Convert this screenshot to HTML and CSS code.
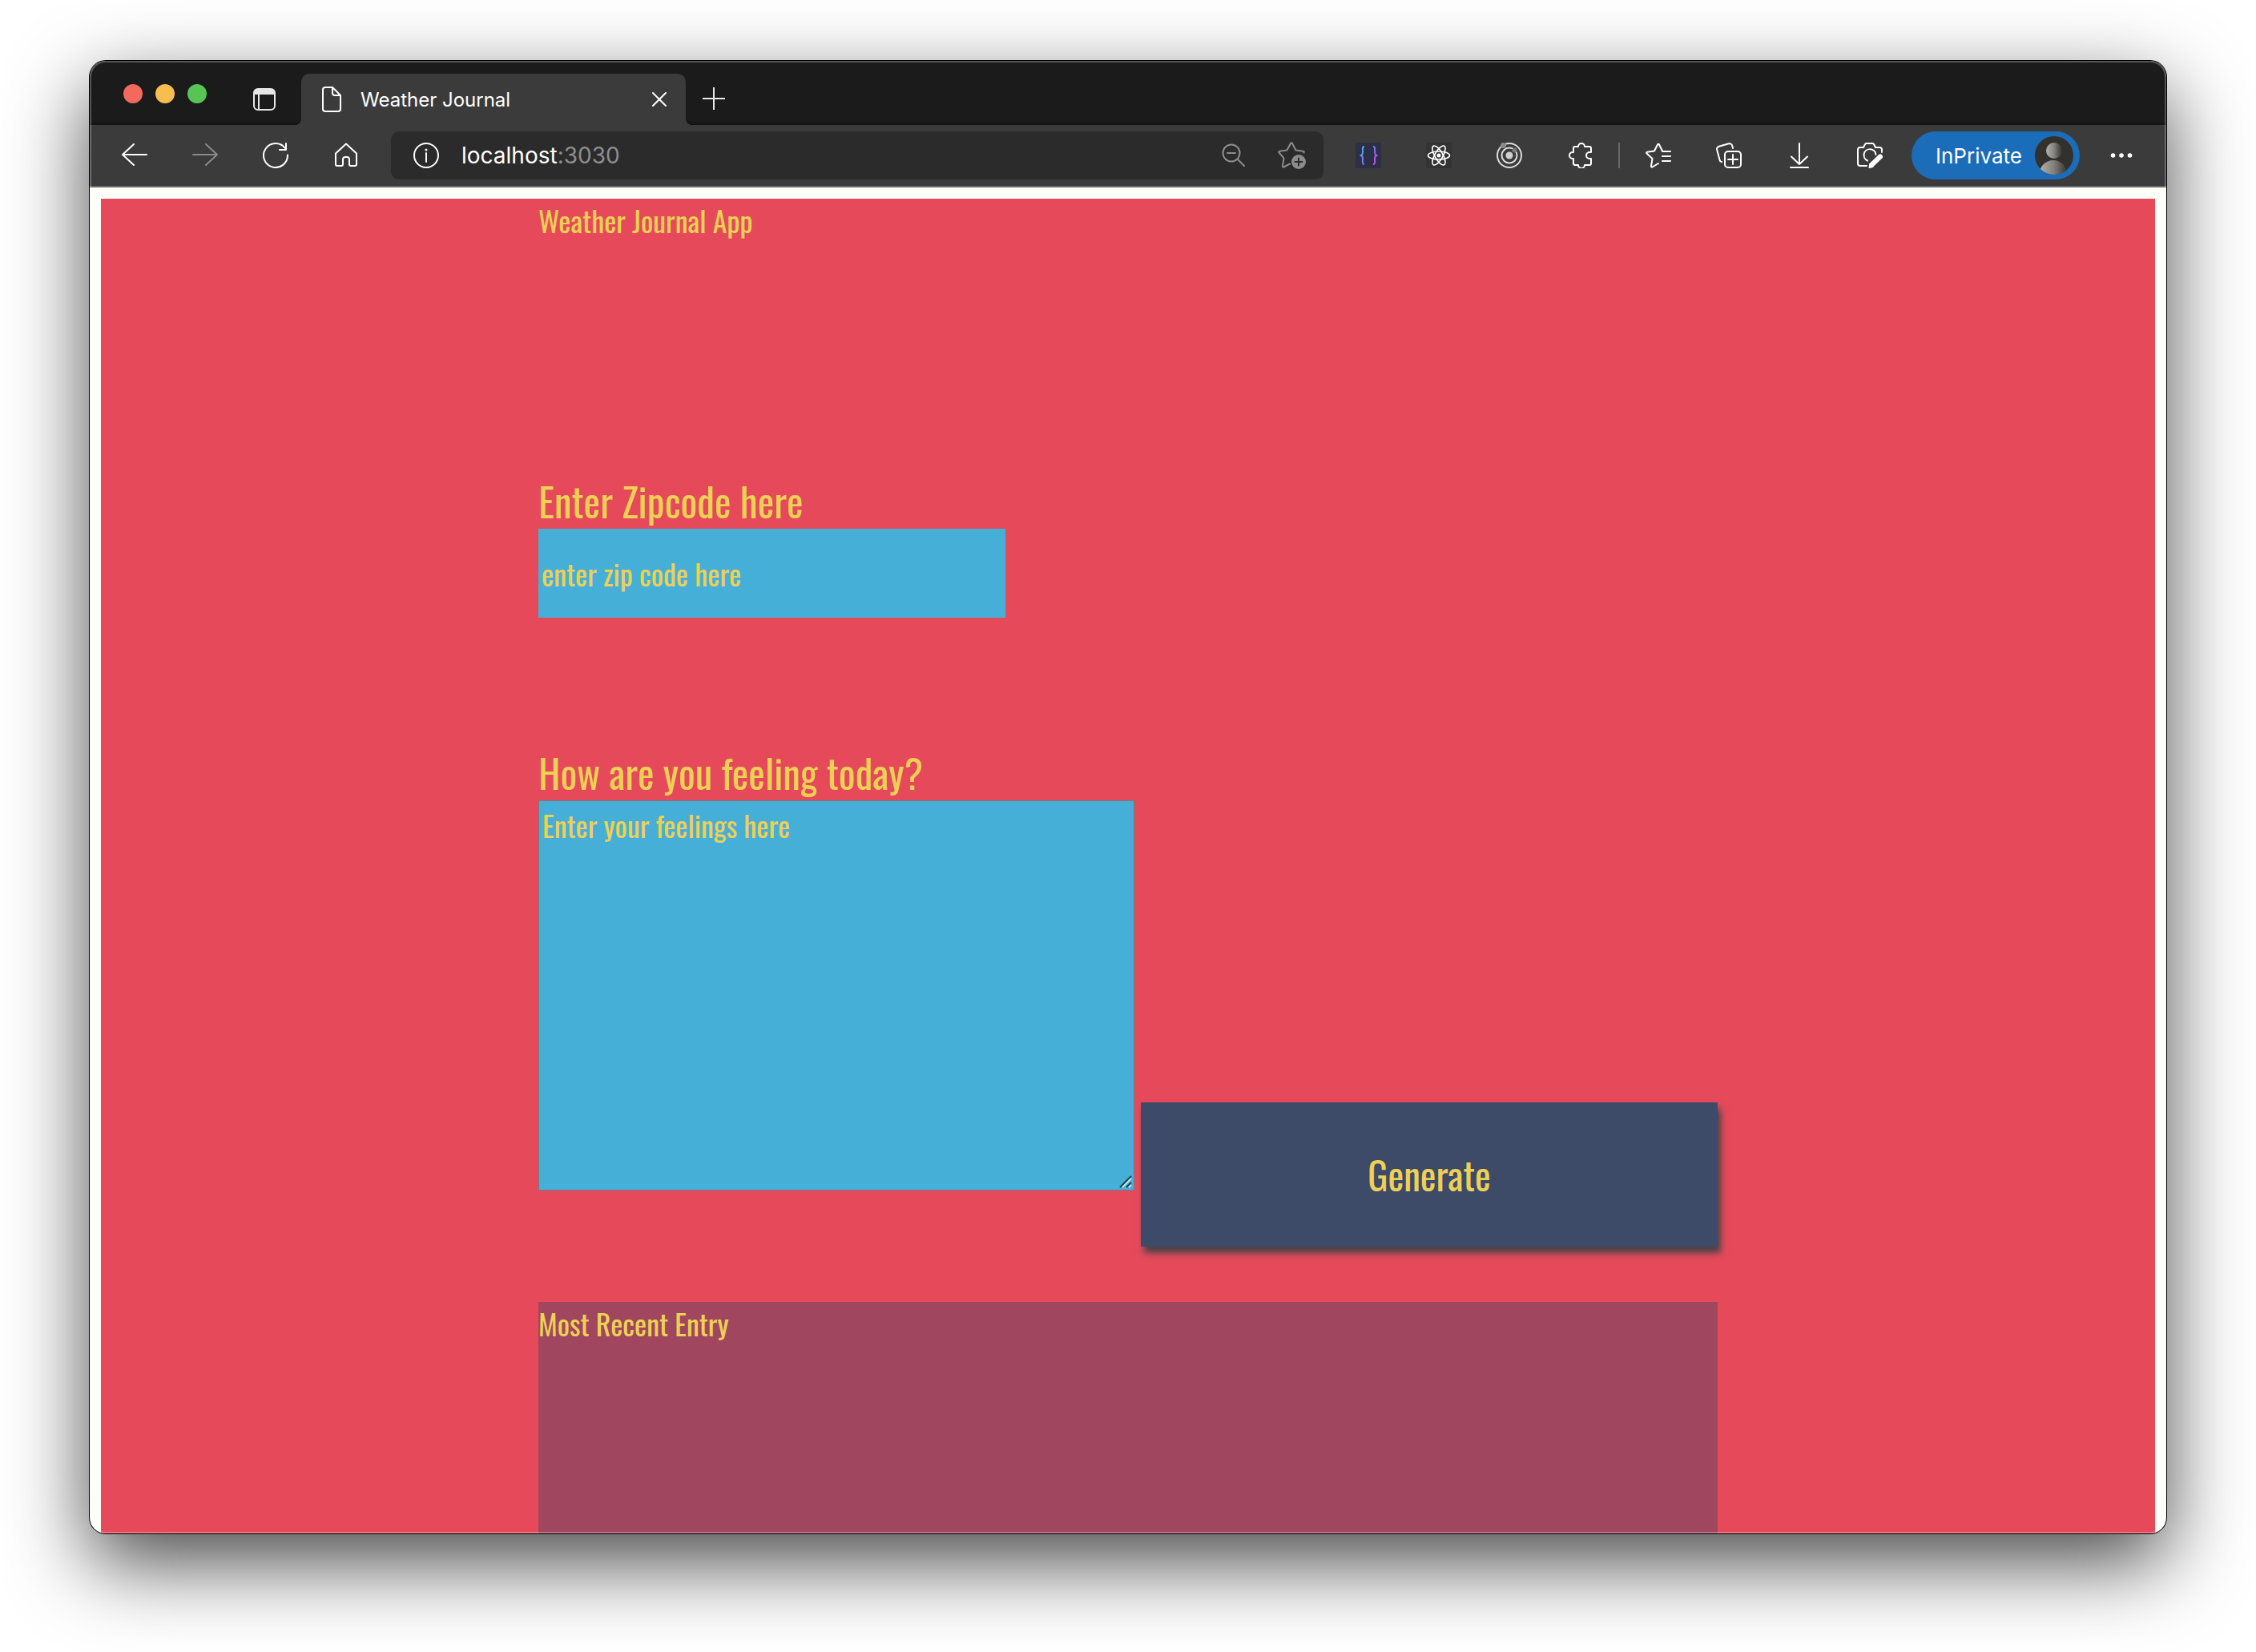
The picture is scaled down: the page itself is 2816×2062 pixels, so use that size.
FILE: index.html
```html
<!DOCTYPE html>
<html lang="en">
<head>
<meta charset="utf-8">
<meta name="viewport" content="width=device-width, initial-scale=1">
<title>Weather Journal</title>
<link rel="stylesheet" href="styles.css">
</head>
<body>
<div class="window">
  <div class="tabstrip">
    <div class="lights">
      <span class="light light-close"></span>
      <span class="light light-min"></span>
      <span class="light light-max"></span>
    </div>
    <button class="icon-btn tab-menu" aria-label="Tab actions">
      <svg width="28" height="28" viewBox="0 0 28 28"><rect x="1" y="1" width="26" height="26" rx="5" fill="none" stroke="#e6e6e6" stroke-width="2"/><path d="M1 8V6a5 5 0 0 1 5-5h16a5 5 0 0 1 5 5v2z" fill="#e6e6e6"/><path d="M7 8v19" stroke="#e6e6e6" stroke-width="2"/></svg>
    </button>
    <div class="tab">
      <svg width="24" height="32" viewBox="0 0 24 32" fill="none" stroke="#fff" stroke-width="2" stroke-linejoin="round"><path d="M13 1H4a3 3 0 0 0-3 3v24a3 3 0 0 0 3 3h16a3 3 0 0 0 3-3V11z"/><path d="M13 1v7a3 3 0 0 0 3 3h7"/></svg>
      <span class="tab-title">Weather Journal</span>
      <button class="icon-btn" aria-label="Close tab">
        <svg width="18" height="18" viewBox="0 0 18 18" stroke="#fff" stroke-width="2" stroke-linecap="round"><path d="M1 1l16 16M17 1L1 17"/></svg>
      </button>
    </div>
    <button class="icon-btn new-tab" aria-label="New tab">
      <svg width="28" height="28" viewBox="0 0 28 28" stroke="#e8e8e8" stroke-width="2"><path d="M14 0v28M0 14h28"/></svg>
    </button>
  </div>

  <div class="toolbar">
    <div class="nav">
      <button class="icon-btn" aria-label="Back"><svg width="32" height="32" viewBox="0 0 32 32" fill="none" stroke="#fff" stroke-width="2" stroke-linecap="round" stroke-linejoin="round"><path d="M31 15H1M15 2L1 15l14 13"/></svg></button>
      <button class="icon-btn" aria-label="Forward"><svg width="32" height="32" viewBox="0 0 32 32" fill="none" stroke="#8a8a8a" stroke-width="2" stroke-linecap="round" stroke-linejoin="round"><path d="M1 15h30M17 2l14 13-14 13"/></svg></button>
      <button class="icon-btn" aria-label="Reload"><svg width="32" height="32" viewBox="0 0 32 32" fill="none" stroke="#fff" stroke-width="2" stroke-linecap="round" stroke-linejoin="round"><path d="M31 15.500A15 15 0 1 1 28 7"/><path d="M29 1v8h-8"/></svg></button>
      <button class="icon-btn" aria-label="Home"><svg width="32" height="32" viewBox="0 0 32 32" fill="none" stroke="#fff" stroke-width="2" stroke-linejoin="round"><path d="M3 13.500L16 1.500l13 12V27a2 2 0 0 1-2 2h-5a2 2 0 0 1-2-2v-6a3 3 0 0 0-3-3h-2a3 3 0 0 0-3 3v6a2 2 0 0 1-2 2H5a2 2 0 0 1-2-2z"/></svg></button>
    </div>
    <div class="address">
      <svg width="32" height="32" viewBox="0 0 32 32" fill="none" stroke="#fff" stroke-width="2"><circle cx="16" cy="16" r="15"/><path d="M16 13v11" stroke-linecap="round"/><circle cx="16" cy="9" r="1.500" fill="#fff" stroke="none"/></svg>
      <span class="url">localhost<span class="port">:3030</span></span>
      <button class="icon-btn zoom-btn" aria-label="Zoom out"><svg width="32" height="32" viewBox="0 0 32 32" fill="none" stroke="#8c8c8c" stroke-width="2" stroke-linecap="round"><circle cx="13" cy="13" r="10.500"/><path d="M8 13h10M20.500 20.500L29 29"/></svg></button>
      <button class="icon-btn" aria-label="Add to favorites"><svg width="36" height="36" viewBox="0 0 36 36" fill="none" stroke="#8c8c8c" stroke-width="2" stroke-linejoin="round" stroke-linecap="round"><path d="M15 28.500L7.500 32.500a1 1 0 0 1-1.500-1.200l1.500-10L1.500 14.500a1 1 0 0 1 .6-1.700l9.400-1.300 4.600-8.800a1 1 0 0 1 1.800 0l4.600 8.800 9.400 1.300a1 1 0 0 1 .6 1.700"/><circle cx="26" cy="26" r="9" fill="#8c8c8c" stroke="none"/><path d="M26 21.500v9M21.500 26h9" stroke="#2b2b2b"/></svg></button>
    </div>
    <div class="extensions">
      <button class="icon-btn" aria-label="JSON viewer"><svg width="32" height="32" viewBox="0 0 32 32"><defs><linearGradient id="brace" x1="0" y1="0" x2="1" y2="1"><stop offset="0" stop-color="#45b8ff"/><stop offset=".5" stop-color="#7c78f0"/><stop offset="1" stop-color="#d944e6"/></linearGradient></defs><rect width="32" height="32" fill="#2c2f45"/><path d="M11 5c-3 0-2 4-2 7 0 2-1 3.500-2 4 1 .5 2 2 2 4 0 3-1 7 2 7M22 5c3 0 2 4 2 7 0 2 1 3.500 2 4-1 .5-2 2-2 4 0 3 1 7-2 7" fill="none" stroke="url(#brace)" stroke-width="2"/></svg></button>
      <button class="icon-btn" aria-label="React tools"><svg width="32" height="32" viewBox="0 0 32 32" fill="none" stroke="#fff" stroke-width="1.600"><rect width="32" height="32" rx="2" fill="#333" stroke="none"/><ellipse cx="16" cy="16" rx="13.500" ry="5"/><ellipse cx="16" cy="16" rx="13.500" ry="5" transform="rotate(60 16 16)"/><ellipse cx="16" cy="16" rx="13.500" ry="5" transform="rotate(120 16 16)"/><circle cx="16" cy="16" r="2.500" fill="#fff" stroke="none"/></svg></button>
      <button class="icon-btn" aria-label="Orbit tools"><svg width="32" height="32" viewBox="0 0 32 32" fill="none" stroke="#dcdcdc" stroke-width="2"><circle cx="16" cy="16" r="15"/><circle cx="16" cy="16" r="9.500"/><circle cx="16" cy="16" r="4.500" fill="#d0d0d0" stroke="none"/><circle cx="8.500" cy="3.500" r="3.500" fill="#8a8a8a" stroke="none"/><circle cx="22.500" cy="9.500" r="3" fill="#7a7a7a" stroke="none"/></svg></button>
      <button class="icon-btn" aria-label="Extensions"><svg width="32" height="32" viewBox="0 0 32 32" fill="none" stroke="#fff" stroke-width="2" stroke-linejoin="round"><path d="M14 5a4 4 0 0 1 8 0h6a2 2 0 0 1 2 2v5h-2a4 4 0 0 0 0 8h2v6a2 2 0 0 1-2 2h-6a4 4 0 0 1-8 0h-4a2 2 0 0 1-2-2v-6H7a4 4 0 0 1 0-8h1V7a2 2 0 0 1 2-2z"/></svg></button>
    </div>
    <span class="divider"></span>
    <div class="tools">
      <button class="icon-btn" aria-label="Favorites"><svg width="32" height="32" viewBox="0 0 32 32" fill="none" stroke="#fff" stroke-width="2" stroke-linecap="round" stroke-linejoin="round"><path d="M16 26l-7.500 4.500a1 1 0 0 1-1.500-1L8.500 20 1.500 13.500a1 1 0 0 1 .5-1.700l9-1.300 4.100-8.300a1 1 0 0 1 1.800 0L21 10.500M21 11h10M21 17h10M21 23h10"/></svg></button>
      <button class="icon-btn" aria-label="Collections"><svg width="32" height="32" viewBox="0 0 32 32" fill="none" stroke="#fff" stroke-width="2" stroke-linecap="round"><rect x="11" y="11" width="20" height="20" rx="4"/><path d="M21 15v12M15 21h12M7 24a3 3 0 0 1-2.500-2.500L1.200 9a3.500 3.500 0 0 1 2.500-4.300L16 1.300A3.500 3.500 0 0 1 20.300 4l.7 3"/></svg></button>
      <button class="icon-btn" aria-label="Downloads"><svg width="32" height="32" viewBox="0 0 32 32" fill="none" stroke="#fff" stroke-width="2" stroke-linecap="round" stroke-linejoin="round"><path d="M16 1v26M6 17.500L16 27l10-9.500M5 31h22"/></svg></button>
      <button class="icon-btn" aria-label="Web capture"><svg width="32" height="32" viewBox="0 0 32 32" fill="none" stroke="#fff" stroke-width="2" stroke-linecap="round" stroke-linejoin="round"><path d="M12 29H4a3 3 0 0 1-3-3V9a3 3 0 0 1 3-3h4l2-4a2 2 0 0 1 1.500-1h8A2 2 0 0 1 21 2l2 4h5a3 3 0 0 1 3 3v3"/><path d="M13 22.500a7.500 7.500 0 1 1 10.500-7.500"/><path d="M29 17.500L18 28" stroke-width="6"/><path d="M15.500 31l1-4 3 3z" fill="#fff"/></svg></button>
    </div>
    <button class="profile">InPrivate
      <svg width="48" height="48" viewBox="0 0 48 48"><defs><linearGradient id="face"><stop offset="0" stop-color="#b5b1ac"/><stop offset=".5" stop-color="#84827e"/><stop offset="1" stop-color="#33312d"/></linearGradient><clipPath id="disc"><circle cx="24" cy="24" r="24"/></clipPath></defs><circle cx="24" cy="24" r="24" fill="#33312d"/><g clip-path="url(#disc)" fill="url(#face)"><circle cx="24" cy="18" r="10"/><ellipse cx="23" cy="49" rx="18" ry="19"/></g></svg>
    </button>
    <button class="icon-btn" aria-label="Settings and more"><svg width="32" height="32" viewBox="0 0 32 32" fill="#fff"><circle cx="5.500" cy="16" r="2.800"/><circle cx="16" cy="16" r="2.800"/><circle cx="26.500" cy="16" r="2.800"/></svg></button>
  </div>

  <main class="page">
    <div class="app">
      <h1 class="headline">Weather Journal App</h1>
      <form class="journal">
        <div class="field zip-field">
          <label for="zip">Enter Zipcode here</label>
          <input class="zip" id="zip" type="text" placeholder="enter zip code here">
        </div>
        <div class="field">
          <label for="feelings">How are you feeling today?</label>
          <div class="entry-row">
            <div class="feelings-box">
              <textarea class="feelings" id="feelings" placeholder="Enter your feelings here"></textarea>
              <svg class="grip" width="16" height="16" viewBox="0 0 16 16" stroke-width="2"><path d="M1 15L15 1M9 15l6-6" stroke="#1d4050"/><path d="M4 15L15 4M12 15l3-3" stroke="#bfe4f2"/></svg>
            </div>
            <button class="generate" type="button">Generate</button>
          </div>
        </div>
      </form>
      <section class="recent">
        <h2 class="headline">Most Recent Entry</h2>
      </section>
    </div>
  </main>
</div>
</body>
</html>
```
FILE: styles.css
```css
* {
  box-sizing: border-box;
}

body {
  margin: 0;
  min-height: 100vh;
  padding: 76px 112px 148px;
  display: flex;
  background: #fff;
  font-family: Inter, "Liberation Sans", sans-serif;
}

button {
  font: inherit;
  color: inherit;
  border: 0;
  padding: 0;
  background: none;
}

svg {
  display: block;
  flex: none;
}

/* Browser window */
.window {
  position: relative;
  flex: 1;
  min-width: 0;
  display: flex;
  flex-direction: column;
  overflow: hidden;
  border-radius: 20px;
  background: #fffff9;
  box-shadow: 0 0 0 1px #000, 0 36px 100px rgba(0, 0, 0, 0.72);
}

.window::after {
  content: "";
  position: absolute;
  inset: 0;
  border-radius: 20px;
  box-shadow: inset 0 0 0 2px rgba(255, 255, 255, 0.25);
  pointer-events: none;
}

.icon-btn {
  display: flex;
  align-items: center;
  justify-content: center;
}

/* Tab strip */
.tabstrip {
  display: flex;
  align-items: flex-end;
  height: 80px;
  padding-left: 42px;
  background: linear-gradient(#1b1b1b 74px, #121212);
}

.lights {
  display: flex;
  gap: 16px;
  padding-bottom: 27px;
}

.light {
  width: 24px;
  height: 24px;
  border-radius: 50%;
}

.light-close { background: #f4695e; }
.light-min { background: #f8bd4f; }
.light-max { background: #57c454; }

.tab-menu {
  margin: 0 32px 18px 58px;
}

.tab {
  position: relative;
  display: flex;
  align-items: center;
  width: 480px;
  height: 64px;
  padding: 0 24px 0 26px;
  border-radius: 10px 10px 0 0;
  background: #3b3b3b;
  color: #fff;
  font-size: 24px;
}

.tab::before,
.tab::after {
  content: "";
  position: absolute;
  bottom: 0;
  width: 8px;
  height: 8px;
}

.tab::before {
  right: 100%;
  background: radial-gradient(circle at 0 0, transparent 8px, #3b3b3b 8px);
}

.tab::after {
  left: 100%;
  background: radial-gradient(circle at 100% 0, transparent 8px, #3b3b3b 8px);
}

.tab-title {
  flex: 1;
  margin-left: 24px;
}

.new-tab {
  margin: 0 0 19px 21px;
}

/* Toolbar */
.toolbar {
  display: flex;
  align-items: center;
  height: 78px;
  padding: 0 40px;
  border-bottom: 2px solid #6b6b6b;
  background: #3b3b3b;
  color: #fff;
  font-size: 28px;
}

.nav,
.extensions,
.tools {
  display: flex;
  gap: 56px;
}

.address {
  flex: 1;
  display: flex;
  align-items: center;
  height: 60px;
  margin: 0 40px;
  padding: 0 21px 0 28px;
  border-radius: 10px;
  background: #2b2b2b;
}

.url {
  flex: 1;
  margin-left: 28px;
}

.port {
  color: #8e8e8e;
}

.zoom-btn {
  margin-right: 39px;
}

.divider {
  width: 2px;
  height: 32px;
  margin: 0 32px;
  background: #676767;
}

.profile {
  display: flex;
  align-items: center;
  justify-content: space-between;
  width: 210px;
  height: 60px;
  margin: 0 36px;
  padding: 0 8px 0 30px;
  border-radius: 30px;
  background: #1b6dba;
  font-size: 26px;
}

/* Page */
.page {
  flex: 1;
  display: flex;
  padding: 14px 14px 0;
}

.app {
  flex: 1;
  display: flex;
  flex-direction: column;
  padding: 0 546px;
  background: #e64a5a;
  color: #edd055;
  font-family: Oswald, "Liberation Sans Narrow", "Liberation Sans", sans-serif;
}

.headline {
  margin: 0;
  font-size: 36px;
  line-height: 54px;
  font-weight: 400;
}

.journal {
  padding: 288px 0 69px;
}

.field {
  display: flex;
  flex-direction: column;
}

.field label {
  font-size: 49px;
  line-height: 70px;
}

.zip-field {
  margin-bottom: 158px;
}

.zip,
.feelings {
  display: block;
  margin: 0;
  outline: 0;
  background: #46afd8;
  color: #edd055;
  font: 36px/52px Oswald, "Liberation Sans Narrow", "Liberation Sans", sans-serif;
}

.zip::placeholder,
.feelings::placeholder {
  color: #edd055;
  opacity: 1;
}

.zip {
  width: 583px;
  height: 111px;
  padding: 0 4px;
  border: 0;
}

.entry-row {
  display: flex;
  align-items: flex-end;
  gap: 8px;
}

.feelings-box {
  position: relative;
  width: 744px;
  margin-bottom: 70px;
}

.feelings {
  width: 100%;
  height: 487px;
  padding: 4px;
  border: 1px solid #6b7f86;
  resize: none;
}

.grip {
  position: absolute;
  right: 3px;
  bottom: 3px;
}

.generate {
  flex: 1;
  height: 180px;
  background: #3d4a68;
  box-shadow: 4px 8px 8px #484448;
  font-size: 47px;
}

.recent {
  flex: 1;
  background: #a0475f;
}
```
